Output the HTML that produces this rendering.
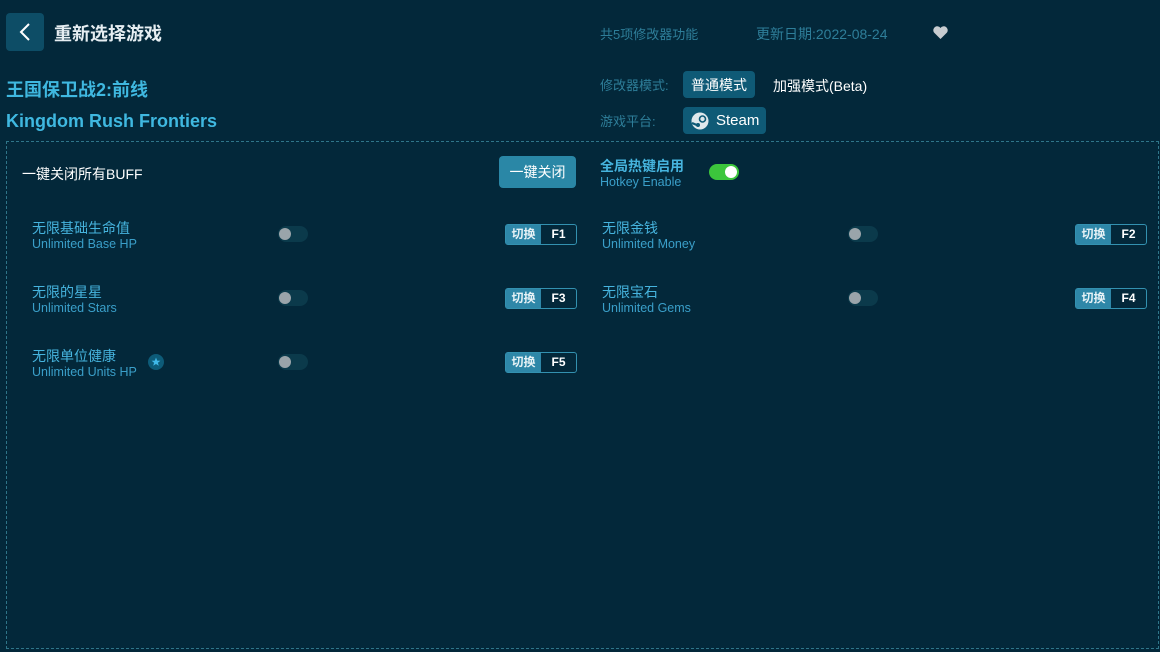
<!DOCTYPE html>
<html><head><meta charset="utf-8"><style>
*{margin:0;padding:0;box-sizing:border-box}
body{width:1160px;height:652px;background:#03283a;font-family:"Liberation Sans","Noto Sans CJK SC",sans-serif;color:#fff;position:relative;overflow:hidden}
.a{position:absolute;white-space:nowrap}
.back{left:6px;top:13px;width:38px;height:38px;background:#0d4d66;border-radius:4px}
.t1{left:54px;top:20px;font-size:18px;font-weight:bold;color:#e6eef2}
.cn{left:6px;top:76px;font-size:18px;font-weight:bold;color:#3fb8e0}
.en{left:6px;top:111px;font-size:18px;font-weight:bold;color:#3fb8e0}
.g{color:#2e7e99;font-size:13px}
.btn{background:#0f5a76;border-radius:4px;color:#fff;font-size:14px}
.box{left:6px;top:141px;width:1153px;height:508px;border:1px dashed #2f7589}
.cb{color:#46b4de;font-size:14px}
.ce{color:#3a9fc9;font-size:12.5px}
.sw{width:30px;height:16px;border-radius:8px;background:#0b3a4b}
.sw i{position:absolute;left:1px;top:2px;width:12px;height:12px;border-radius:6px;background:#9aa4aa}
.hk{width:72px;height:21px;border:1px solid #3391b0;border-radius:3px;font-size:12px}
.hk b{position:absolute;left:0;top:0;width:35px;height:19px;background:#2e87a8;text-align:center;line-height:19px;font-weight:bold;color:#e6f2f6}
.hk span{position:absolute;left:35px;top:0;width:35px;text-align:center;line-height:19px;color:#fff;font-weight:bold}
</style></head><body>
<div class="a back"><svg width="38" height="38"><path d="M23 11 L15 19 L23 27" stroke="#fff" stroke-width="2" fill="none"/></svg></div>
<div class="a t1">重新选择游戏</div>
<div class="a g" style="left:600px;top:24px">共5项修改器功能</div>
<div class="a g" style="left:756px;top:24px;font-size:14px">更新日期:2022-08-24</div>
<svg class="a" style="left:933px;top:26px" width="15" height="13" viewBox="0 0 15 13"><path d="M7.5 13 L1 6.5 A3.5 3.5 0 0 1 7.5 2 A3.5 3.5 0 0 1 14 6.5 Z" fill="#c8ccd0"/></svg>
<div class="a cn">王国保卫战2:前线</div>
<div class="a en">Kingdom Rush Frontiers</div>
<div class="a g" style="left:600px;top:75px">修改器模式:</div>
<div class="a btn" style="left:683px;top:71px;width:72px;height:27px;line-height:28px;text-align:center">普通模式</div>
<div class="a" style="left:773px;top:76px;font-size:14px">加强模式(Beta)</div>
<div class="a g" style="left:600px;top:111px">游戏平台:</div>
<div class="a btn" style="left:683px;top:107px;width:83px;height:27px">
<svg class="a" style="left:8px;top:5px" width="18" height="18" viewBox="0 0 18 18"><circle cx="9" cy="9" r="8.5" fill="#dfe8ec"/><circle cx="11.5" cy="7" r="3" fill="none" stroke="#0f5a76" stroke-width="1.6"/><path d="M1 11 L7 13.5" stroke="#0f5a76" stroke-width="2.2"/><circle cx="7" cy="13" r="2" fill="#0f5a76"/></svg>
<span class="a" style="left:33px;top:5px;font-size:15px">Steam</span></div>
<div class="a box"></div>
<div class="a" style="left:22px;top:164px;font-size:14px">一键关闭所有BUFF</div>
<div class="a" style="left:499px;top:156px;width:77px;height:32px;background:#2a87a6;border-radius:4px;text-align:center;line-height:32px;font-size:14px">一键关闭</div>
<div class="a cb" style="left:600px;top:156px;font-weight:bold">全局热键启用</div>
<div class="a ce" style="left:600px;top:175px">Hotkey Enable</div>
<div class="a" style="left:709px;top:164px;width:30px;height:16px;border-radius:8px;background:#3cc63c"><i style="position:absolute;left:16px;top:2px;width:12px;height:12px;border-radius:6px;background:#fff"></i></div>

<div class="a cb" style="left:32px;top:218px">无限基础生命值</div><div class="a ce" style="left:32px;top:237px">Unlimited Base HP</div>
<div class="a sw" style="left:278px;top:226px"><i></i></div>
<div class="a hk" style="left:505px;top:224px"><b>切换</b><span>F1</span></div>

<div class="a cb" style="left:602px;top:218px">无限金钱</div><div class="a ce" style="left:602px;top:237px">Unlimited Money</div>
<div class="a sw" style="left:848px;top:226px"><i></i></div>
<div class="a hk" style="left:1075px;top:224px"><b>切换</b><span>F2</span></div>

<div class="a cb" style="left:32px;top:282px">无限的星星</div><div class="a ce" style="left:32px;top:301px">Unlimited Stars</div>
<div class="a sw" style="left:278px;top:290px"><i></i></div>
<div class="a hk" style="left:505px;top:288px"><b>切换</b><span>F3</span></div>

<div class="a cb" style="left:602px;top:282px">无限宝石</div><div class="a ce" style="left:602px;top:301px">Unlimited Gems</div>
<div class="a sw" style="left:848px;top:290px"><i></i></div>
<div class="a hk" style="left:1075px;top:288px"><b>切换</b><span>F4</span></div>

<div class="a cb" style="left:32px;top:346px">无限单位健康</div><div class="a ce" style="left:32px;top:365px">Unlimited Units HP</div>
<svg class="a" style="left:148px;top:354px" width="16" height="16" viewBox="0 0 16 16"><circle cx="8" cy="8" r="8" fill="#0d5b78"/><path d="M8 3.5 L9.2 6.6 L12.4 6.7 L9.9 8.7 L10.8 11.8 L8 10 L5.2 11.8 L6.1 8.7 L3.6 6.7 L6.8 6.6 Z" fill="#3fb8e8"/></svg>
<div class="a sw" style="left:278px;top:354px"><i></i></div>
<div class="a hk" style="left:505px;top:352px"><b>切换</b><span>F5</span></div>
</body></html>
